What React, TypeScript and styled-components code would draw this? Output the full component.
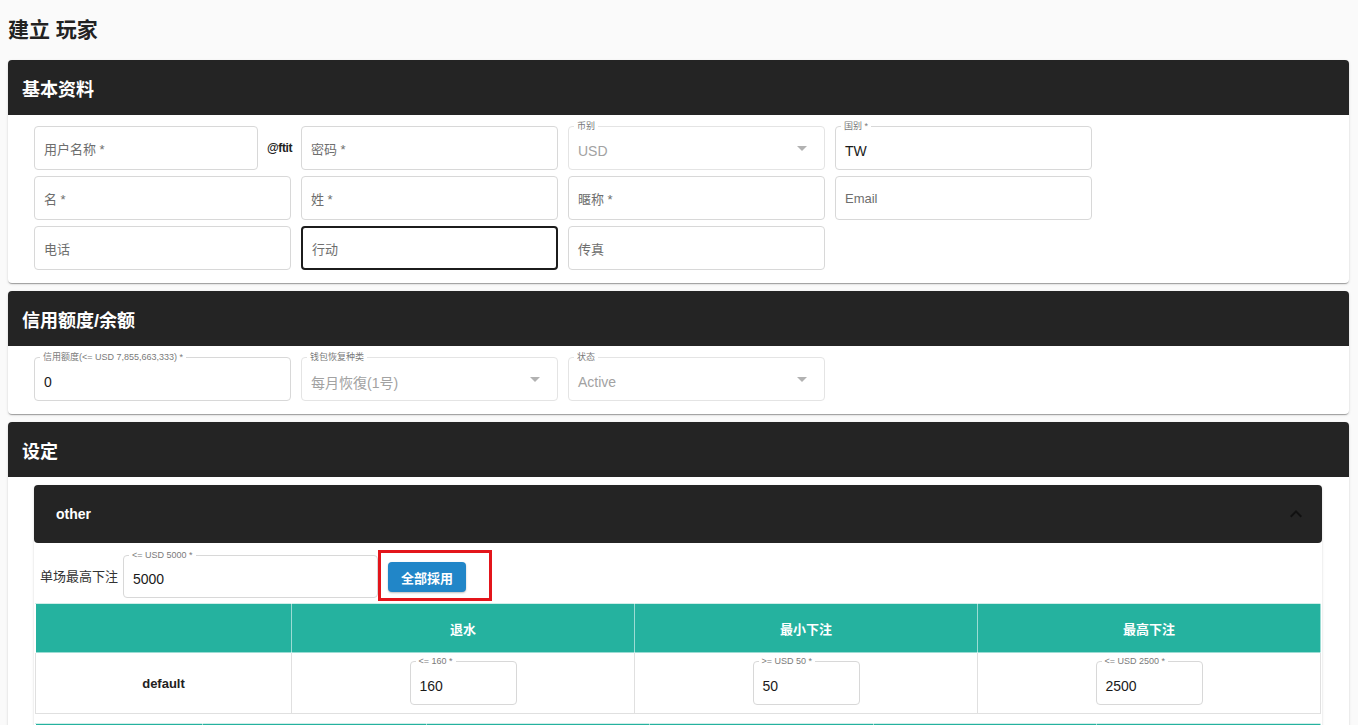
import React from 'react';
import styled, { createGlobalStyle } from 'styled-components';

const GlobalStyle = createGlobalStyle`
  * { box-sizing: border-box; }
  body {
    margin: 0;
    background: #fafafa;
    font-family: "Liberation Sans", "Noto Sans CJK SC", sans-serif;
    color: #222;
  }
`;

const Page = styled.div`
  padding: 0 9px 40px 8px;
`;

const Title = styled.h1`
  margin: 0;
  height: 60px;
  padding-bottom: 4px;
  display: flex;
  align-items: center;
  font-size: 21px;
  font-weight: 700;
  color: #222;
`;

const Panel = styled.section`
  margin-bottom: 8px;
  background: #fff;
  border-radius: 4px;
  box-shadow: 0 2px 1px -1px rgba(0, 0, 0, 0.2), 0 1px 1px 0 rgba(0, 0, 0, 0.14),
    0 1px 3px 0 rgba(0, 0, 0, 0.12);
`;

const PanelHeader = styled.div`
  height: 55px;
  display: flex;
  align-items: center;
  padding: 0 14px;
  background: #242424;
  color: #fff;
  font-size: 18px;
  font-weight: 700;
  border-radius: 4px 4px 0 0;
`;

const PanelBody = styled.div<{ $pad: string }>`
  padding: ${(p) => p.$pad};
`;

const FieldGrid = styled.div`
  display: grid;
  grid-template-columns: repeat(4, 257px);
  column-gap: 10px;
  row-gap: 6px;
`;

const UserCell = styled.div`
  display: flex;
  align-items: center;
`;

const Suffix = styled.span`
  flex: none;
  width: 33px;
  padding-left: 9px;
  font-size: 12px;
  font-weight: 600;
  letter-spacing: -0.4px;
  color: #222;
  white-space: nowrap;
`;

const Box = styled.div<{ $focused?: boolean; $disabled?: boolean; $w?: number; $h?: number }>`
  position: relative;
  display: flex;
  align-items: center;
  flex: ${(p) => (p.$w ? 'none' : '1 1 auto')};
  width: ${(p) => (p.$w ? `${p.$w}px` : '100%')};
  height: ${(p) => p.$h ?? 44}px;
  margin: ${(p) => (p.$w ? '0 auto' : '0')};
  padding: 0 ${(p) => (p.$focused ? 9 : 10)}px 0 9px;
  border: ${(p) =>
    p.$focused ? '2px solid #1c1c1c' : `1px solid ${p.$disabled ? '#e4e4e4' : '#d8d8d8'}`};
  border-radius: 4px;
  background: #fff;
  text-align: left;
`;

const FloatLabel = styled.span`
  position: absolute;
  top: -6px;
  left: 5px;
  padding: 0 3px;
  background: #fff;
  font-size: 9px;
  line-height: 11px;
  color: #7a7a7a;
  white-space: nowrap;
`;

const Value = styled.span<{ $disabled?: boolean; $labeled?: boolean }>`
  flex: 1;
  padding-top: ${(p) => (p.$labeled ? 5 : 0)}px;
  font-size: 14px;
  color: ${(p) => (p.$disabled ? '#a2a2a2' : '#1a1a1a')};
  white-space: nowrap;
`;

const Placeholder = styled.span`
  flex: 1;
  font-size: 13px;
  color: #6e6e6e;
`;

const Arrow = styled.svg`
  width: 24px;
  height: 24px;
  fill: rgba(0, 0, 0, 0.3);
  flex: none;
`;

type FieldProps = {
  label?: string;
  value?: string;
  placeholder?: string;
  focused?: boolean;
  disabled?: boolean;
  select?: boolean;
  width?: number;
  height?: number;
};

const Field = ({ label, value, placeholder, focused, disabled, select, width, height }: FieldProps) => (
  <Box $focused={focused} $disabled={disabled} $w={width} $h={height}>
    {label && <FloatLabel>{label}</FloatLabel>}
    {value !== undefined ? (
      <Value $disabled={disabled} $labeled={!!label}>
        {value}
      </Value>
    ) : (
      <Placeholder>{placeholder}</Placeholder>
    )}
    {select && (
      <Arrow viewBox="0 0 24 24">
        <path d="M7 10l5 5 5-5z" />
      </Arrow>
    )}
  </Box>
);

const Accordion = styled.div`
  border-radius: 4px;
  box-shadow: 0 2px 1px -1px rgba(0, 0, 0, 0.2), 0 1px 1px 0 rgba(0, 0, 0, 0.14),
    0 1px 3px 0 rgba(0, 0, 0, 0.12);
  background: #fff;
`;

const Summary = styled.div`
  height: 58px;
  display: flex;
  align-items: center;
  justify-content: space-between;
  padding: 0 14px 0 22px;
  background: #242424;
  border-radius: 4px;
  color: #fff;
  font-size: 14px;
  font-weight: 700;
`;

const Chevron = styled.svg`
  width: 24px;
  height: 24px;
  fill: #111;
`;

const Details = styled.div`
  padding: 0 1px;
`;

const LimitRow = styled.div`
  display: flex;
  align-items: center;
  padding: 7px 0 2px 5px;
`;

const LimitLabel = styled.span`
  margin-right: 5px;
  font-size: 13px;
  color: #333;
  white-space: nowrap;
`;

const LimitField = styled.div`
  width: 255px;
  margin-top: 2px;
  display: flex;
`;

const Highlight = styled.div`
  width: 114px;
  height: 51px;
  padding: 9px 0 0 7px;
  border: 3px solid #e3151b;
`;

const ApplyButton = styled.button`
  width: 78px;
  height: 30px;
  border: none;
  border-radius: 4px;
  background: #2186c8;
  color: #fff;
  font-family: inherit;
  font-size: 13px;
  font-weight: 700;
  box-shadow: 0 1px 2px rgba(0, 0, 0, 0.25);
`;

const Table = styled.table<{ $mt?: number }>`
  width: 100%;
  margin-top: ${(p) => p.$mt ?? 0}px;
  border-collapse: collapse;
  table-layout: fixed;
`;

const Th = styled.th`
  height: 49px;
  background: #25b29f;
  color: #fff;
  font-size: 13px;
  font-weight: 700;
  text-align: center;
  border: 1px solid rgba(255, 255, 255, 0.55);
  border-top-color: #cfeee9;
`;

const Td = styled.td`
  height: 61px;
  padding: 0;
  border: 1px solid #e0e0e0;
  text-align: center;
  vertical-align: middle;
`;

const RowName = styled.span`
  font-size: 13px;
  font-weight: 700;
  color: #222;
`;

export default function App() {
  return (
    <Page>
      <GlobalStyle />
      <Title>建立 玩家</Title>

      <Panel>
        <PanelHeader>基本资料</PanelHeader>
        <PanelBody $pad="11px 26px 13px">
          <FieldGrid>
            <UserCell>
              <Field placeholder="用户名称 *" />
              <Suffix>@ftit</Suffix>
            </UserCell>
            <Field placeholder="密码 *" />
            <Field label="币别" value="USD" disabled select />
            <Field label="国别 *" value="TW" />
            <Field placeholder="名 *" />
            <Field placeholder="姓 *" />
            <Field placeholder="暱称 *" />
            <Field placeholder="Email" />
            <Field placeholder="电话" />
            <Field placeholder="行动" focused />
            <Field placeholder="传真" />
          </FieldGrid>
        </PanelBody>
      </Panel>

      <Panel>
        <PanelHeader>信用额度/余额</PanelHeader>
        <PanelBody $pad="11px 26px 13px">
          <FieldGrid>
            <Field label="信用额度(<= USD 7,855,663,333) *" value="0" />
            <Field label="钱包恢复种类" value="每月恢復(1号)" disabled select />
            <Field label="状态" value="Active" disabled select />
          </FieldGrid>
        </PanelBody>
      </Panel>

      <Panel>
        <PanelHeader>设定</PanelHeader>
        <PanelBody $pad="8px 27px 0 26px">
          <Accordion>
            <Summary>
              <span>other</span>
              <Chevron viewBox="0 0 24 24">
                <path d="M12 8l-6 6 1.41 1.41L12 10.83l4.59 4.58L18 14z" />
              </Chevron>
            </Summary>
            <Details>
              <LimitRow>
                <LimitLabel>单场最高下注</LimitLabel>
                <LimitField>
                  <Field label="<= USD 5000  *" value="5000" height={43} />
                </LimitField>
                <Highlight>
                  <ApplyButton>全部採用</ApplyButton>
                </Highlight>
              </LimitRow>

              <Table>
                <colgroup>
                  <col style={{ width: 256 }} />
                  <col />
                  <col />
                  <col />
                </colgroup>
                <thead>
                  <tr>
                    <Th />
                    <Th>退水</Th>
                    <Th>最小下注</Th>
                    <Th>最高下注</Th>
                  </tr>
                </thead>
                <tbody>
                  <tr>
                    <Td>
                      <RowName>default</RowName>
                    </Td>
                    <Td>
                      <Field label="<= 160 *" value="160" width={107} />
                    </Td>
                    <Td>
                      <Field label=">= USD 50 *" value="50" width={107} />
                    </Td>
                    <Td>
                      <Field label="<= USD 2500 *" value="2500" width={107} />
                    </Td>
                  </tr>
                </tbody>
              </Table>

              <Table $mt={9}>
                <colgroup>
                  <col style={{ width: 167 }} />
                  <col />
                  <col />
                  <col />
                  <col />
                  <col />
                </colgroup>
                <thead>
                  <tr>
                    <Th />
                    <Th />
                    <Th />
                    <Th />
                    <Th />
                    <Th />
                  </tr>
                </thead>
              </Table>
            </Details>
          </Accordion>
        </PanelBody>
      </Panel>
    </Page>
  );
}
